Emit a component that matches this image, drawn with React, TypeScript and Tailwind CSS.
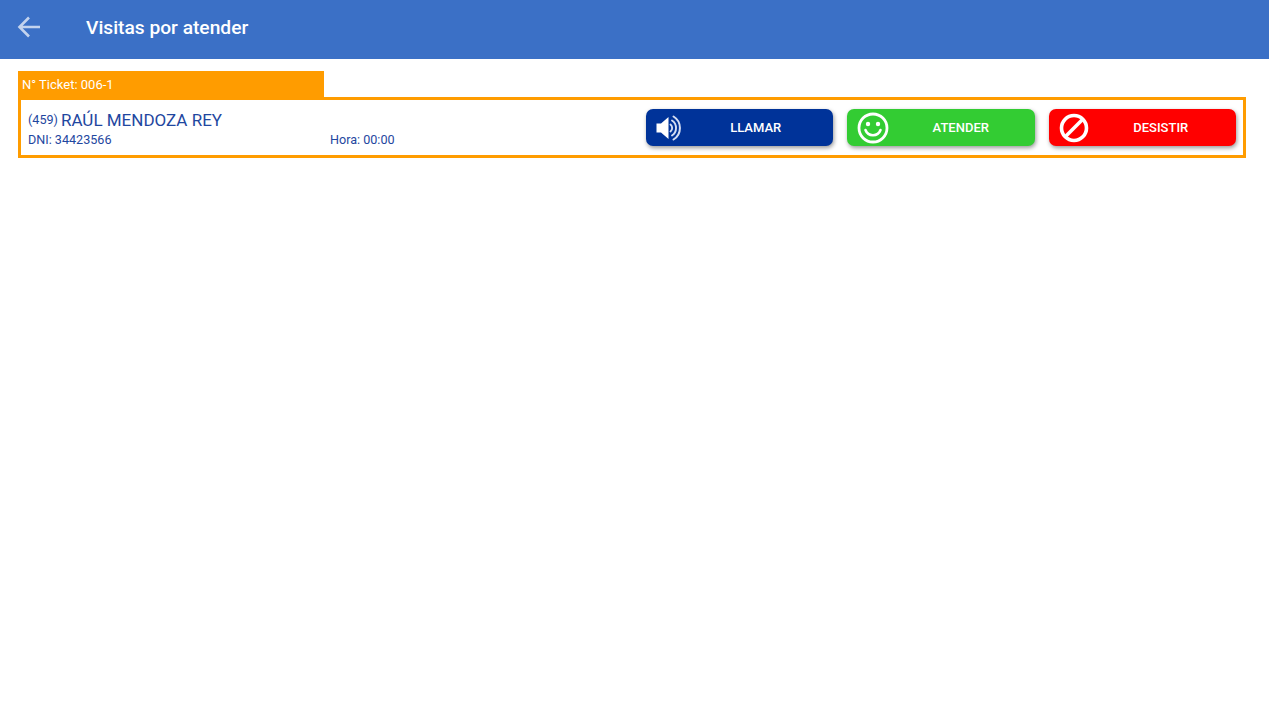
import type { ReactNode } from 'react';

const SpeakerIcon = () => (
  <svg width="28" height="30" viewBox="0 0 28 30" fill="none" className="shrink-0">
    <path d="M1.5 10.5h4.5l7.5-6.5v22L6 19.5H1.5z" fill="#fff" />
    <path d="M15.5 11.5a4.5 4.5 0 0 1 0 7" stroke="#d5def2" strokeWidth="1.9" strokeLinecap="round" />
    <path d="M17 7.5a9 9 0 0 1 0 15" stroke="#d5def2" strokeWidth="1.9" strokeLinecap="round" />
    <path d="M18.5 3.5a13.5 13.5 0 0 1 0 23" stroke="#d5def2" strokeWidth="2" strokeLinecap="round" />
  </svg>
);

const SmileIcon = () => (
  <svg width="32" height="32" viewBox="0 0 32 32" fill="none" className="shrink-0">
    <circle cx="16" cy="16" r="14" stroke="#fff" strokeWidth="2.8" />
    <circle cx="11" cy="12" r="2.2" fill="#fff" />
    <circle cx="21" cy="12" r="2.2" fill="#fff" />
    <path d="M8.5 18a8 8 0 0 0 15 0" stroke="#fff" strokeWidth="2.6" strokeLinecap="round" />
  </svg>
);

const BanIcon = () => (
  <svg width="30" height="30" viewBox="0 0 30 30" fill="none" className="shrink-0">
    <circle cx="15" cy="15" r="12.5" stroke="#fff" strokeWidth="3.6" />
    <path d="M23.5 6.5l-17 17" stroke="#fff" strokeWidth="3.6" />
  </svg>
);

const ActionButton = ({
  icon,
  label,
  color,
  iconClass,
  textClass,
}: {
  icon: ReactNode;
  label: string;
  color: string;
  iconClass: string;
  textClass: string;
}) => (
  <button
    type="button"
    className={`relative flex h-[37px] w-[187.5px] items-center justify-center rounded-[7px] text-[13px] font-medium text-white shadow-[1px_2px_4px_rgba(0,0,0,0.4)] ${color} ${textClass}`}
  >
    <span className={`absolute top-1/2 -translate-y-1/2 ${iconClass}`}>{icon}</span>
    {label}
  </button>
);

export default function App() {
  return (
    <div className="min-h-[707px] bg-white font-['Roboto',sans-serif]">
      <header className="flex h-[59px] items-center bg-[#3b70c6] pb-[3px] pl-[17px] text-white">
        <svg width="24" height="24" viewBox="0 0 24 24" fill="none" className="shrink-0">
          <path
            d="M23 11H3M12 1.5L2.5 11l9.5 9.5"
            stroke="#c3d3ee"
            strokeWidth="2.6"
          />
        </svg>
        <h1 className="ml-[45px] text-[19.2px] font-medium">Visitas por atender</h1>
      </header>

      <main className="px-[18px] pr-[23px] pt-[12px]">
        <div className="flex h-[26px] w-[306px] items-center bg-[#ff9c00] pl-[4px] pt-[2px] text-[13px] text-white">
          N° Ticket: 006-1
        </div>
        <div className="flex h-[61px] items-center justify-between border-[3px] border-[#ff9c00] pl-[7px] pr-[7px] text-[#1f47a0]">
          <div className="w-[400px] pb-[1px]">
            <p className="flex items-center gap-[3px] text-[17px] leading-[24px]">
              <span className="text-[12.6px]">(459)</span>
              RAÚL MENDOZA REY
            </p>
            <div className="flex text-[12.6px] leading-[15px]">
              <span className="w-[302px]">DNI: 34423566</span>
              <span>Hora: 00:00</span>
            </div>
          </div>
          <div className="flex gap-[14px]">
            <ActionButton icon={<SpeakerIcon />} label="LLAMAR" color="bg-[#003399]" iconClass="left-[9px]" textClass="pl-[33px]" />
            <ActionButton icon={<SmileIcon />} label="ATENDER" color="bg-[#33cc33]" iconClass="left-[10px]" textClass="pl-[40px]" />
            <ActionButton icon={<BanIcon />} label="DESISTIR" color="bg-[#ff0000]" iconClass="left-[10px]" textClass="pl-[37px]" />
          </div>
        </div>
      </main>
    </div>
  );
}
